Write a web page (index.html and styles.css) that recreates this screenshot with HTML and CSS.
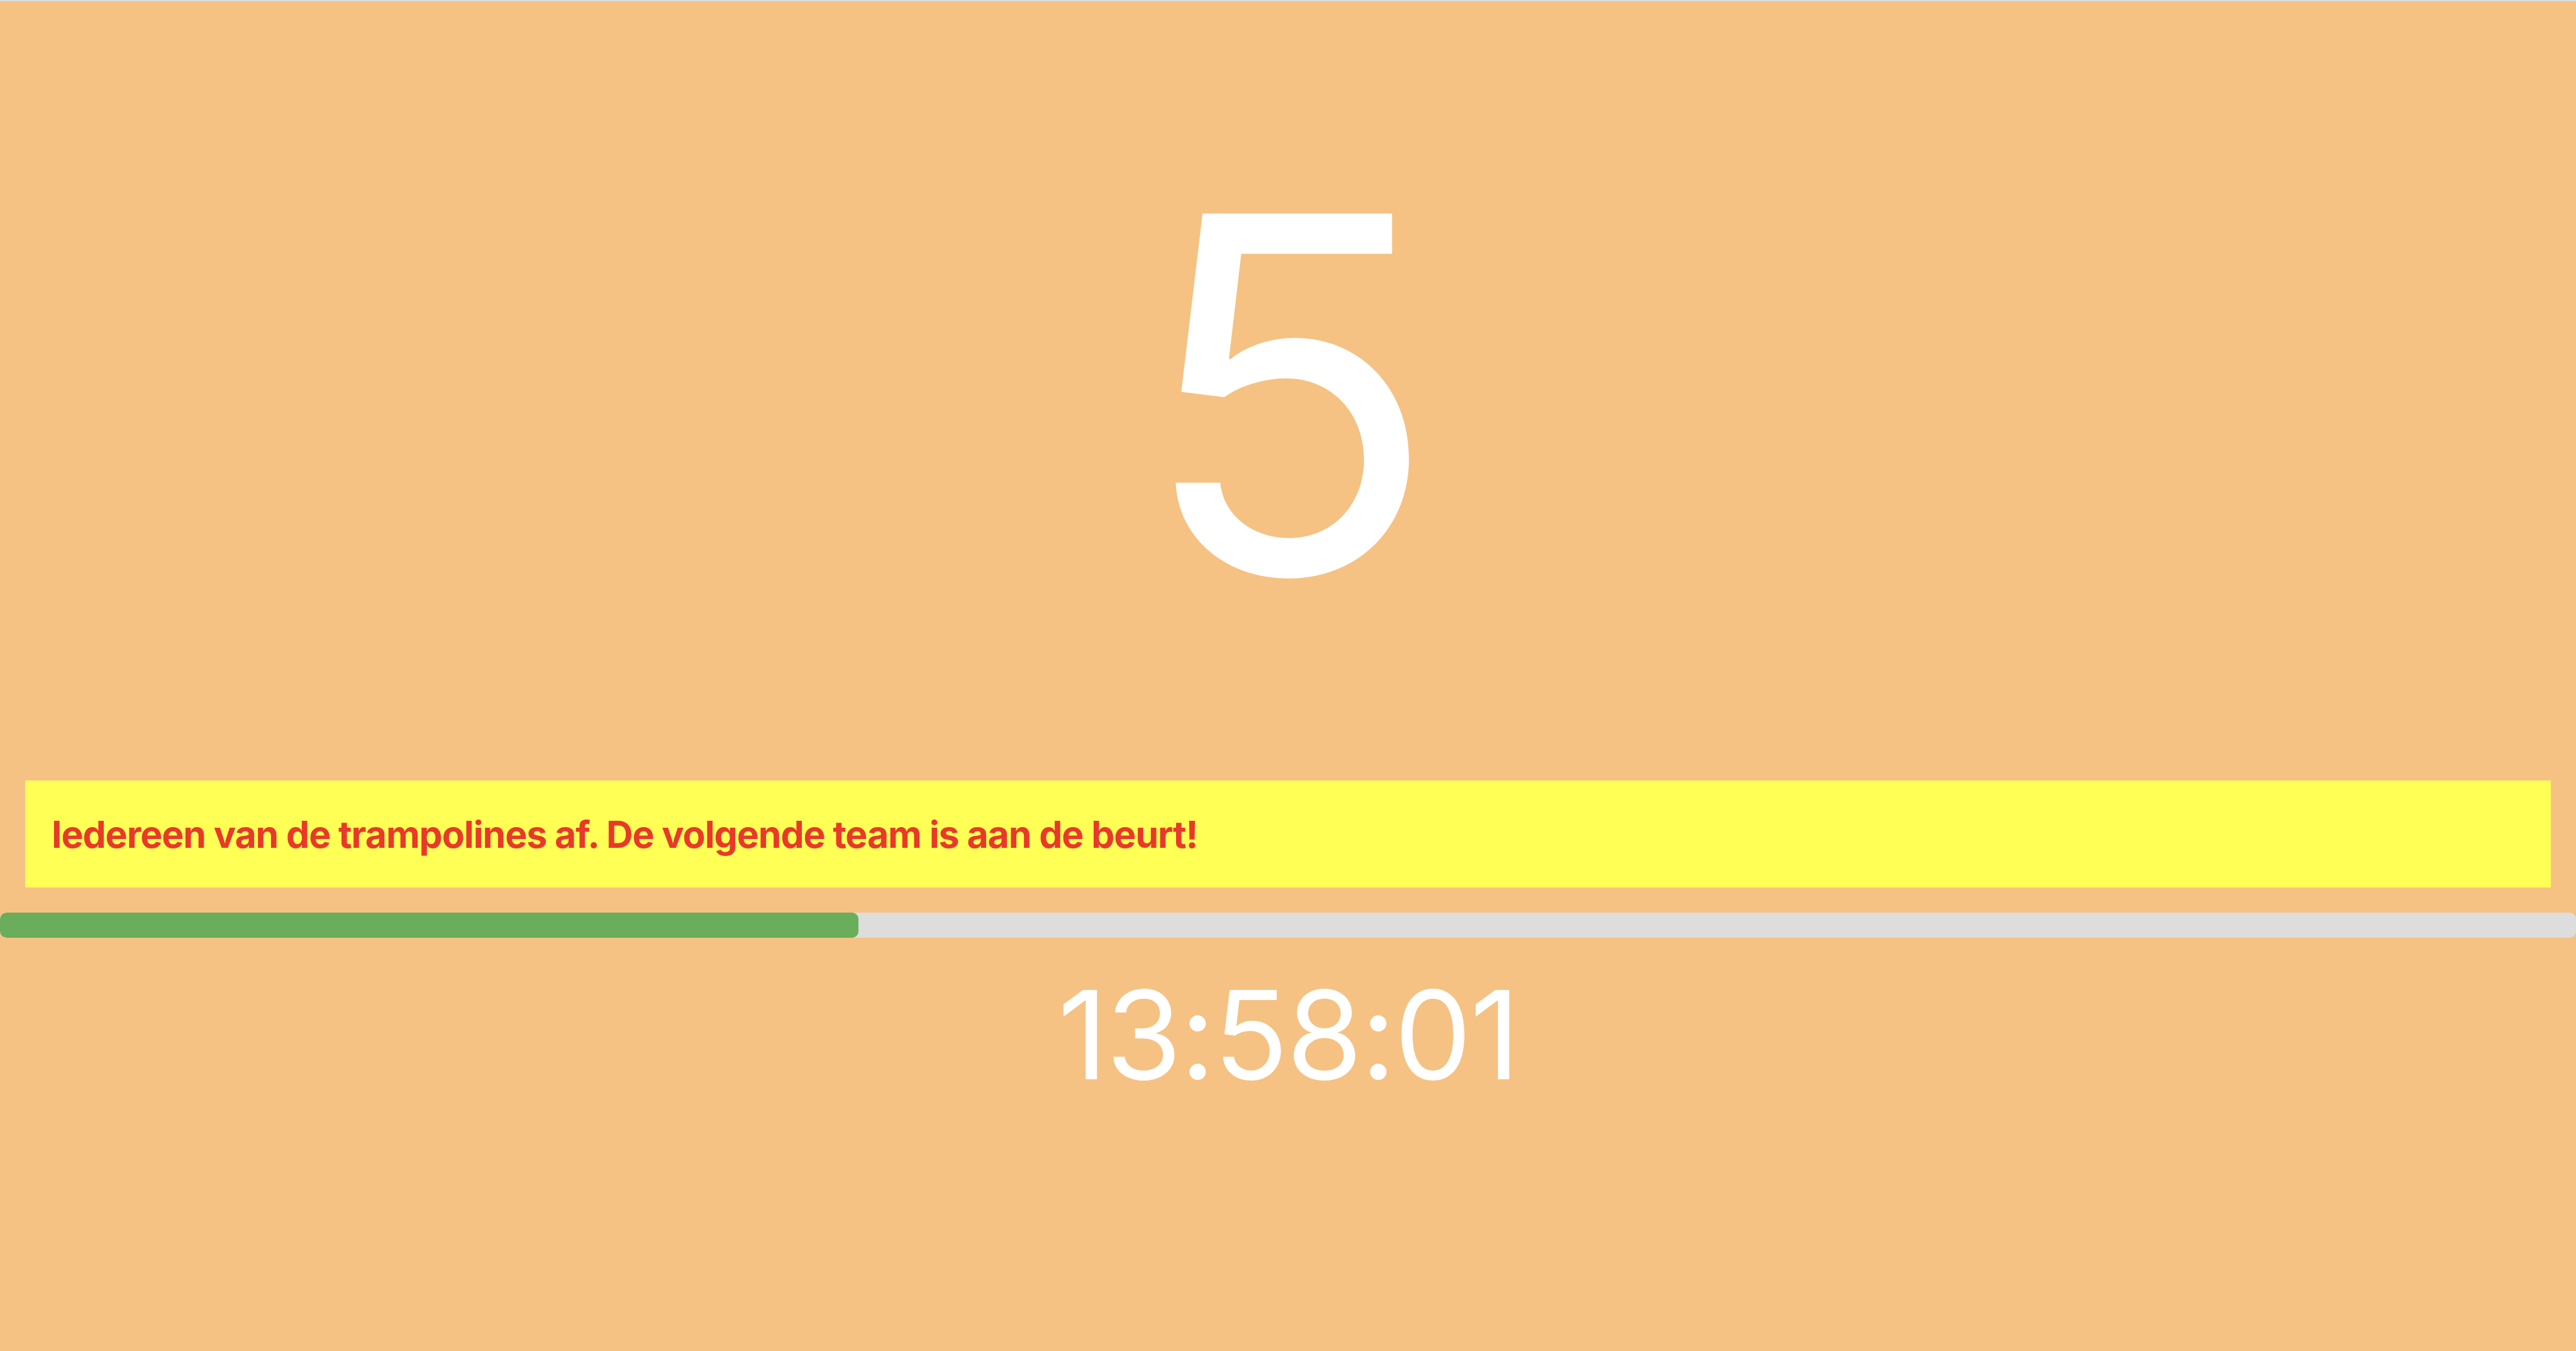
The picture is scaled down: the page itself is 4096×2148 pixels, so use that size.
FILE: index.html
```html
<!DOCTYPE html>
<html lang="nl">
<head>
<meta charset="utf-8">
<title>Timer</title>
<link rel="stylesheet" href="styles.css">
</head>
<body>
<div class="topline"></div>
<main class="screen">
  <div class="count">5</div>
  <div class="banner">Iedereen van de trampolines af. De volgende team is aan de beurt!</div>
  <div class="track"><div class="fill" style="width: 33.33%"></div></div>
  <div class="clock">13:58:01</div>
</main>
</body>
</html>
```
FILE: styles.css
```css
html, body {
  margin: 0;
  padding: 0;
}
body {
  background: #f5c283;
  font-family: Inter, "Noto Sans", "Liberation Sans", sans-serif;
  min-height: 2148px;
}
.topline {
  height: 2px;
  background: #dddddd;
}
.screen {
  display: flex;
  flex-direction: column;
}
.count {
  color: #ffffff;
  font-size: 787px;
  line-height: normal;
  text-align: center;
  padding-top: 148px;
}
.banner {
  margin: 139px 40px 0;
  height: 170px;
  padding: 0 42px;
  display: flex;
  align-items: center;
  background: #ffff55;
  color: #e8392a;
  font-size: 59px;
  font-weight: 700;
  letter-spacing: -1.1px;
}
.track {
  margin-top: 40px;
  height: 40px;
  background: #dddddd;
  border-radius: 10px;
  overflow: hidden;
}
.fill {
  height: 100%;
  background: #6aae5c;
  border-radius: 10px;
}
.clock {
  margin-top: 36px;
  color: #ffffff;
  font-size: 195px;
  line-height: normal;
  text-align: center;
  letter-spacing: -2.7px;
}
```
